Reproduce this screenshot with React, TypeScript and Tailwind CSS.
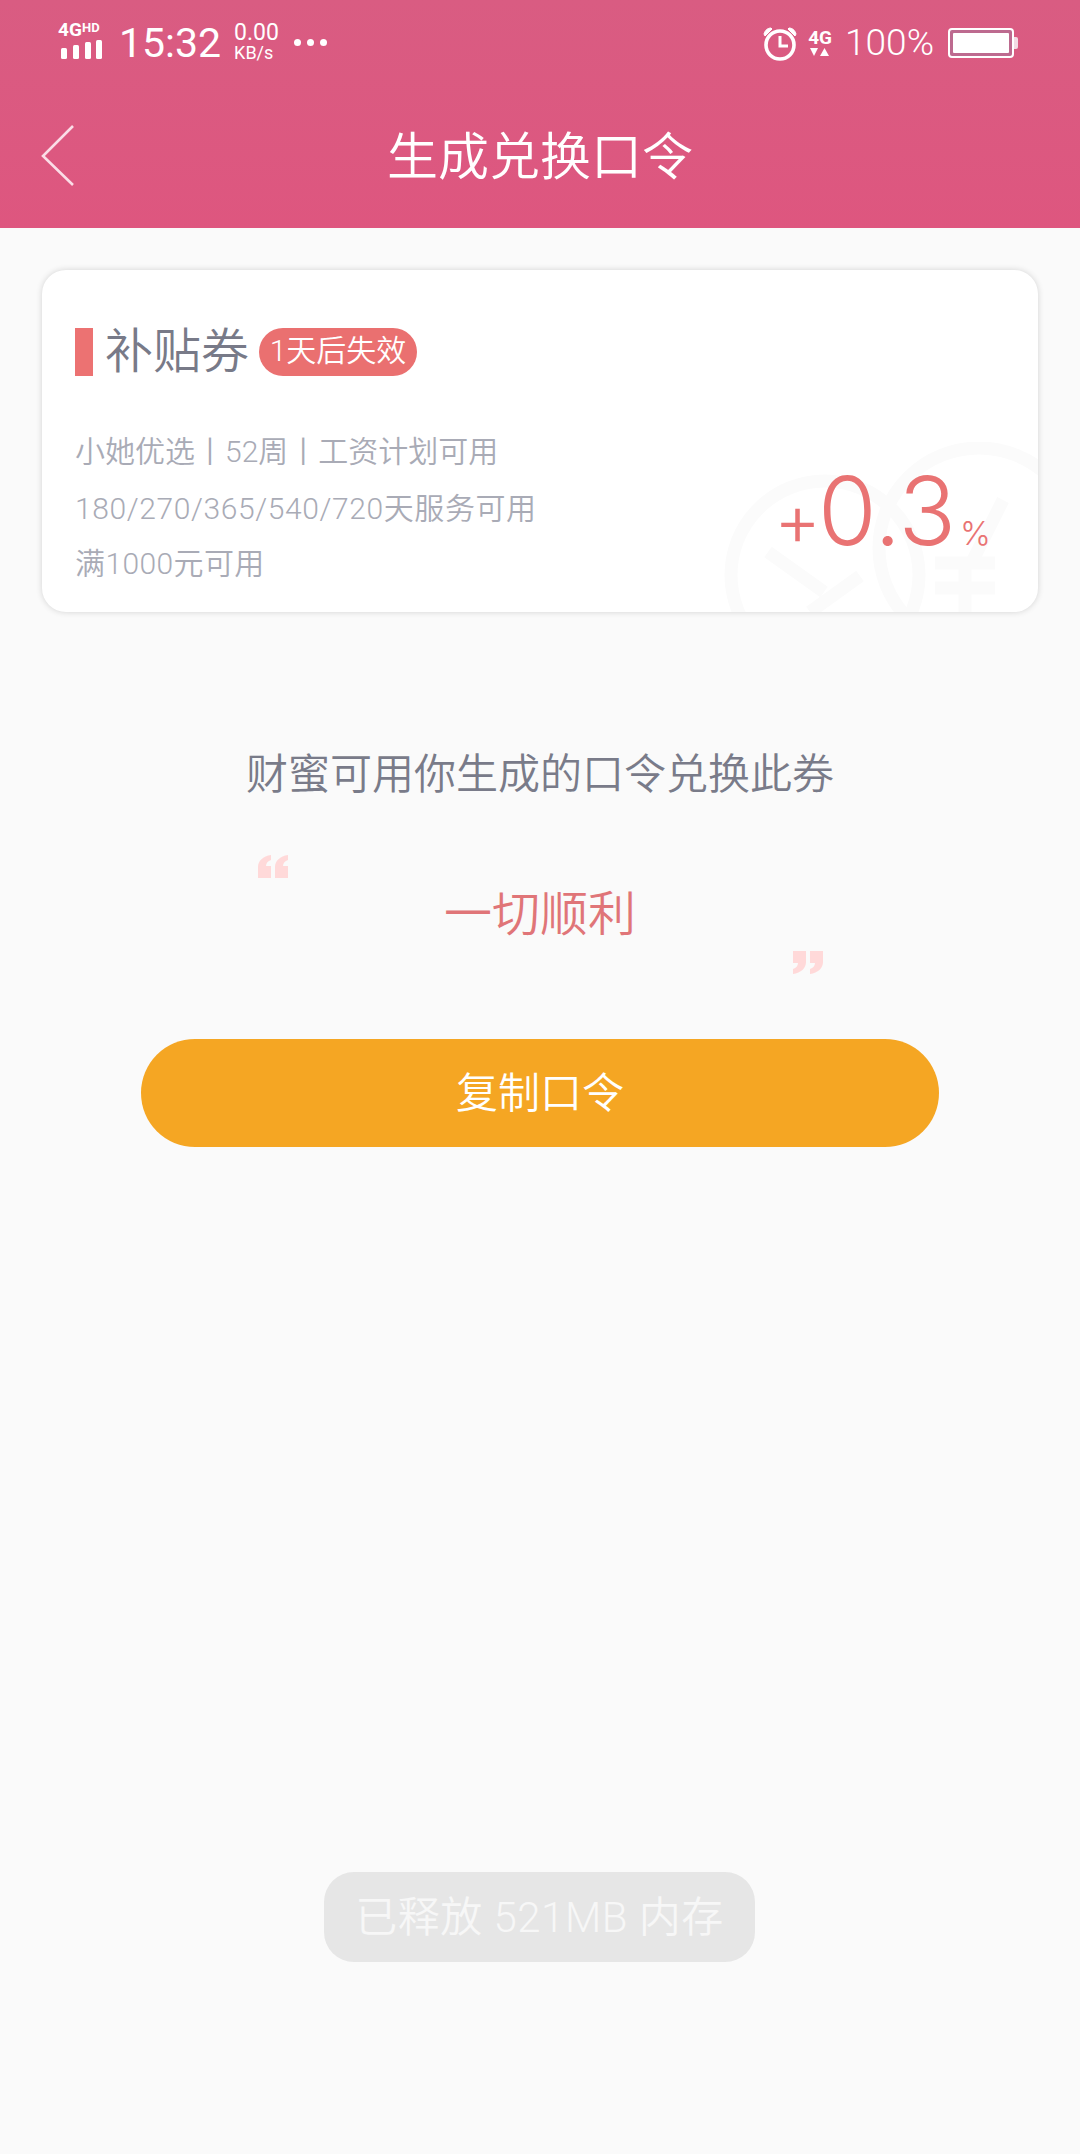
import React from 'react';

const cjk = "font-['Roboto','Noto_Sans_CJK_SC',sans-serif]";

// Status bar left side: signal block with 4G HD label
const SignalIcon = () => (
  <div className="relative w-[42px] h-[36px]">
    <span className="absolute left-[-2px] top-[-5px] font-['Roboto'] font-bold text-[19px] leading-[20px] text-white">4G</span>
    <span className="absolute left-[22px] top-[-4px] font-['Roboto'] font-bold text-[13px] leading-[14px] text-white">HD</span>
    <svg className="absolute left-0 top-[14px]" width="42" height="20" viewBox="0 0 42 20" fill="#fff">
      <rect x="1" y="9" width="6" height="11" rx="1.5" />
      <rect x="13" y="6" width="6" height="14" rx="1.5" />
      <rect x="25" y="3" width="6" height="17" rx="1.5" />
      <rect x="36" y="1" width="6" height="19" rx="1.5" />
    </svg>
  </div>
);

const AlarmIcon = () => (
  <svg width="34" height="36" viewBox="0 0 34 36" fill="none" stroke="#fff">
    <circle cx="17" cy="20" r="14" strokeWidth="3.6" />
    <path d="M17 11v10h8" strokeWidth="3" />
    <path d="M1 9c1-4 4-6 7-6l1 1-7 7z" fill="#fff" strokeWidth="1" />
    <path d="M33 9c-1-4-4-6-7-6l-1 1 7 7z" fill="#fff" strokeWidth="1" />
  </svg>
);

const Net4G = () => (
  <div className="flex flex-col items-center w-[24px]">
    <span className="font-['Roboto'] font-bold text-[19px] leading-[19px] text-white">4G</span>
    <svg width="20" height="10" viewBox="0 0 20 10" fill="#fff">
      <path d="M0 1h8L4 9z" />
      <path d="M10 9h9l-4.500-8z" />
    </svg>
  </div>
);

const Battery = () => (
  <div className="flex items-center">
    <div className="w-[66px] h-[30px] rounded-[4px] border-2 border-white p-[3px] bg-[#bd6a8f]">
      <div className="w-full h-full bg-white rounded-[1px]" />
    </div>
    <div className="w-[4px] h-[12px] bg-[#f3dbe4] rounded-r-[2px]" />
  </div>
);

const StatusBar = () => (
  <div className="flex items-center justify-between h-[84px] pl-[60px] pr-[62px] pt-[1px]">
    <div className="flex items-center">
      <SignalIcon />
      <span className="ml-[17px] font-['Roboto'] text-[41px] leading-[44px] text-white">15:32</span>
      <div className="ml-[13px] flex flex-col font-['Roboto'] text-white">
        <span className="text-[23px] leading-[20px]">0.00</span>
        <span className="text-[18px] leading-[19px]">KB/s</span>
      </div>
      <div className="ml-[15px] flex gap-[6px]">
        <span className="w-[7px] h-[7px] rounded-full bg-white" />
        <span className="w-[7px] h-[7px] rounded-full bg-white" />
        <span className="w-[7px] h-[7px] rounded-full bg-white" />
      </div>
    </div>
    <div className="flex items-center">
      <AlarmIcon />
      <div className="ml-[11px]"><Net4G /></div>
      <span className="ml-[13px] font-['Roboto'] font-[350] text-[37px] leading-[40px] text-white">100%</span>
      <div className="ml-[14px]"><Battery /></div>
    </div>
  </div>
);

// faint yen coins behind the rate
const CoinWatermark = () => (
  <svg className="absolute left-[676px] top-[172px]" width="320" height="170" viewBox="0 0 320 170" fill="none" stroke="#fbfbfb" strokeWidth="13">
    <circle cx="107" cy="133" r="94" />
    <circle cx="261" cy="106" r="100" />
    <path d="M50 110l56 40M142 134l-50 36" />
    <path d="M285 58l-30 60M217 121h60M217 146h60M247 118v52" />
  </svg>
);

const Quote = ({ flip }: { flip?: boolean }) => (
  <svg className={flip ? 'rotate-180' : ''} width="30" height="23" viewBox="0 0 30 23" fill="#ffd9d9">
    <path d="M0 23V12C0 6 5 1 13 0v5c-3 1-5 3-5 6h5v12z" />
    <path d="M17 23V12c0-6 5-11 13-12v5c-3 1-5 3-5 6h5v12z" />
  </svg>
);

const Coupon = () => (
  <div className="relative overflow-hidden mx-[42px] mt-[42px] h-[342px] rounded-[24px] bg-white shadow-[0_0_6px_rgba(0,0,0,0.16)]">
    <CoinWatermark />
    <div className="relative pl-[33px] pt-[58px]">
      <div className="flex items-center h-[48px]">
        <div className="w-[18px] h-[48px] bg-[#ec7272]" />
        <span className={`ml-[12px] text-[48px] font-[350] leading-[48px] text-[#787a88] ${cjk}`}>补贴券</span>
        <span className={`ml-[10px] h-[48px] w-[158px] text-center rounded-full bg-[#ea7070] text-white font-[350] text-[30px] leading-[46px] ${cjk}`}>1天后失效</span>
      </div>
      <div className={`mt-[48px] flex flex-col text-[#a9abb6] font-[350] text-[30px] leading-[56px] ${cjk}`}>
        <span>小她优选丨52周丨工资计划可用</span>
        <span className="tracking-[0.6px] mt-[1px]">180/270/365/540/720天服务可用</span>
        <span className="tracking-[0.4px] -mt-[1px]">满1000元可用</span>
      </div>
    </div>
    <div className="absolute right-[47px] top-[201px] flex items-baseline text-[#e97373] font-['Inter',sans-serif] font-light">
      <span className="text-[72px] leading-[80px]">+</span>
      <span className="-ml-[3px] text-[95px] leading-[80px]">0.3</span>
      <span className="ml-[4px] text-[33px] leading-[80px]">%</span>
    </div>
  </div>
);

const Passcode = () => (
  <div className="flex flex-col items-center">
    <p className={`mt-[135px] text-[42px] font-[350] leading-[56px] text-[#797b89] ${cjk}`}>财蜜可用你生成的口令兑换此券</p>
    <div className="relative w-[565px] h-[120px] mt-[54px]">
      <div className="absolute left-0 top-[-2px]"><Quote /></div>
      <div className="absolute right-0 top-[94px]"><Quote flip /></div>
      <p className={`pt-[28px] text-center text-[48px] font-[350] leading-[60px] text-[#e07578] ${cjk}`}>一切顺利</p>
    </div>
    <button className={`mt-[62px] w-[798px] h-[108px] rounded-full bg-[#f5a623] text-white text-[42px] font-[350] ${cjk}`}>复制口令</button>
  </div>
);

export default function App() {
  return (
    <div className="relative w-[1080px] h-[2154px] overflow-hidden bg-[#fafafa]">
      <div className="h-[228px] bg-gradient-to-b from-[#d95c82] to-[#de567f]">
        <StatusBar />
        <div className="relative flex items-center justify-center h-[144px]">
          <svg className="absolute left-[41px] top-[41px]" width="34" height="62" viewBox="0 0 34 62" fill="none" stroke="#fbdde7" strokeWidth="2.600">
            <path d="M32 1L2 31l30 29" />
          </svg>
          <h1 className={`text-[51px] leading-[60px] text-white font-[350] mt-[4px] ${cjk}`}>生成兑换口令</h1>
        </div>
      </div>
      <Coupon />
      <Passcode />
      {/* toast */}
      <div className={`absolute left-[324px] top-[1872px] w-[431px] h-[90px] flex items-center justify-center rounded-[30px] bg-[#e6e6e6] text-[#f7f7f7] font-[350] text-[42px] tracking-[0.5px] ${cjk}`}>
        已释放 521MB 内存
      </div>
    </div>
  );
}
